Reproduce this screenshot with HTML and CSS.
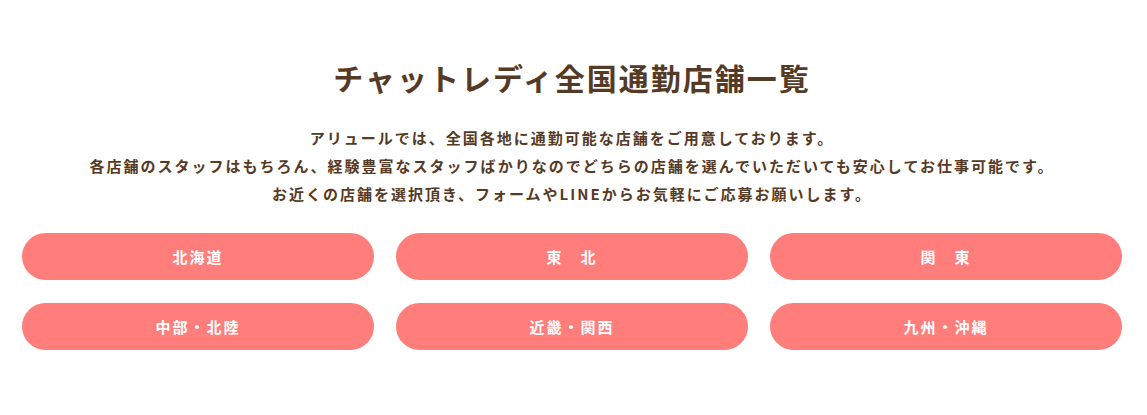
FILE: index.html
```html
<html lang="ja">
<head>
    <meta charset="UTF-8">
    <meta name="viewport" content="width=device-width, initial-scale=1.0">
    <title>チャットレディ全国通勤店舗一覧</title>
<link rel="stylesheet" href="styles.css">
</head>
<body>
    <section class="shops">
        <h2 class="shops-title">チャットレディ全国通勤店舗一覧</h2>
        <p class="shops-lead">
            アリュールでは、全国各地に通勤可能な店舗をご用意しております。<br>
            各店舗のスタッフはもちろん、経験豊富なスタッフばかりなのでどちらの店舗を選んでいただいても安心してお仕事可能です。<br>
            お近くの店舗を選択頂き、フォームやLINEからお気軽にご応募お願いします。
        </p>
        <ul class="area-list">
            <li><a class="area-btn" href="#">北海道</a></li>
            <li><a class="area-btn" href="#">東　北</a></li>
            <li><a class="area-btn" href="#">関　東</a></li>
            <li><a class="area-btn" href="#">中部・北陸</a></li>
            <li><a class="area-btn" href="#">近畿・関西</a></li>
            <li><a class="area-btn" href="#">九州・沖縄</a></li>
        </ul>
    </section>
</body>
</html>
```
FILE: styles.css
```css
body {
    font-family: "Noto Sans CJK JP", "Noto Sans", sans-serif;
    background-color: #ffffff;
    color: #553a26;
    margin: 0;
    padding: 0;
}
.shops {
    width: 1100px;
    margin: 0 0 0 22px;
    padding-top: 55px;
}
.shops-title {
    margin: 0;
    text-align: center;
    font-size: 30px;
    line-height: 44px;
    font-weight: 700;
    letter-spacing: 2px;
}
.shops-lead {
    margin: 25px 0 0;
    text-align: center;
    font-size: 15px;
    line-height: 28px;
    font-weight: 700;
    letter-spacing: 2px;
}
.area-list {
    list-style: none;
    margin: 25px 0 0;
    padding: 0;
    display: grid;
    grid-template-columns: repeat(3, 1fr);
    column-gap: 22px;
    row-gap: 23px;
}
.area-btn {
    display: block;
    height: 47px;
    line-height: 47px;
    border-radius: 24px;
    background-color: #ff7e7b;
    color: #ffffff;
    text-align: center;
    text-decoration: none;
    font-size: 15px;
    font-weight: 700;
    letter-spacing: 2px;
}
```
